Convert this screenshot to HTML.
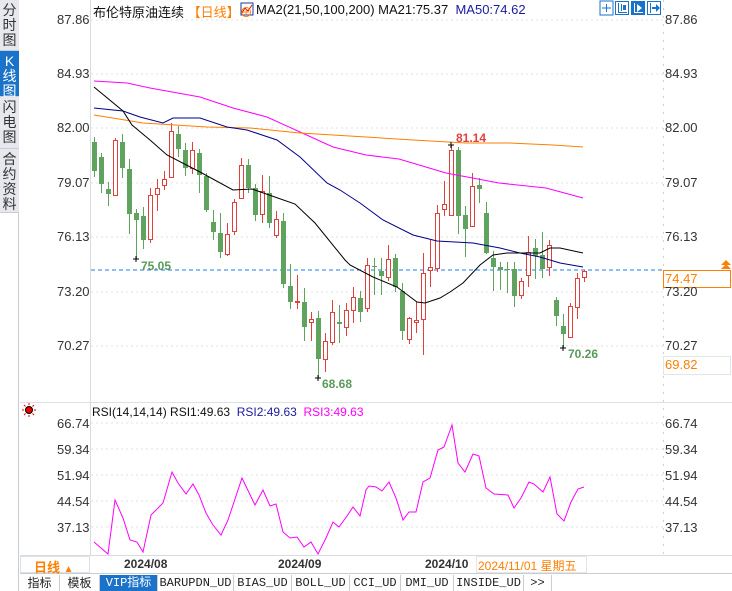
<!DOCTYPE html>
<html><head><meta charset="utf-8">
<style>
*{margin:0;padding:0;box-sizing:border-box}
body{width:732px;height:591px;overflow:hidden;background:#fff;font-family:"Liberation Sans","Noto Sans CJK SC",sans-serif;position:relative}
.side{position:absolute;left:0;top:0;width:19px;height:591px;background:#fff;border-right:1px solid #c8ccd4}
.tab{position:absolute;left:0;width:19px;background:#e6e8ee;color:#333;font-size:14px;line-height:15px;text-align:center;padding-top:3px;border-bottom:1px solid #c8ccd4}
.tab.on{background:#1a73c8;color:#fff}
.t{position:absolute;white-space:nowrap}
.ax{font-size:13px;color:#333;right:auto}
.btab{position:absolute;top:575px;height:16px;font-size:12px;line-height:16px;text-align:center;border-right:1px solid #c8ccd4;color:#222;font-family:"Liberation Mono","Noto Sans CJK SC",monospace}
</style></head><body>
<div class="side">
 <div class="tab" style="top:0;height:51px">分<br>时<br>图</div>
 <div class="tab on" style="top:51px;height:46px">K<br>线<br>图</div>
 <div class="tab" style="top:97px;height:52px">闪<br>电<br>图</div>
 <div class="tab" style="top:149px;height:64px">合<br>约<br>资<br>料</div>
</div>
<svg style="position:absolute;left:0;top:0" width="732" height="591" id="s">
 <g stroke="#e2e2e2" stroke-dasharray="2,3">
  <line x1="91" x2="663" y1="20" y2="20"/><line x1="91" x2="663" y1="74" y2="74"/><line x1="91" x2="663" y1="128" y2="128"/><line x1="91" x2="663" y1="183" y2="183"/><line x1="91" x2="663" y1="237" y2="237"/><line x1="91" x2="663" y1="292" y2="292"/><line x1="91" x2="663" y1="346" y2="346"/>
  <line x1="91" x2="663" y1="423" y2="423"/><line x1="91" x2="663" y1="449" y2="449"/><line x1="91" x2="663" y1="475" y2="475"/><line x1="91" x2="663" y1="501" y2="501"/><line x1="91" x2="663" y1="527" y2="527"/>
 </g>
 <line x1="90.5" x2="90.5" y1="0" y2="555" stroke="#d8dce2"/>
 <line x1="663.5" x2="663.5" y1="0" y2="555" stroke="#d0d0d0" stroke-dasharray="2,6"/>
 <line x1="20" x2="732" y1="402.5" y2="402.5" stroke="#dde1e6"/>
 <line x1="20" x2="732" y1="555.5" y2="555.5" stroke="#d8dce2"/>
 <line x1="20" x2="732" y1="573.5" y2="573.5" stroke="#c8ccd4"/>
 <line x1="91" x2="663" y1="270" y2="270" stroke="#1a7ff0" stroke-dasharray="4,3"/>
 <g id="c"></g>
 <g fill="none" stroke-width="1">
  <polyline stroke="#ff00ff" points="94,81 127,83 150,88 200,97 233,108 267,117 300,132 333,147 366,155 399,159 446,173 499,183 546,188 583,198"/>
  <polyline stroke="#ff7f00" points="94,115 143,123 207,127 250,128 300,133 366,137 413,140 466,143 509,143 553,145 583,147"/>
  <polyline stroke="#00008b" points="94,108 123,111 140,117 163,123 173,118 200,118 227,127 247,130 277,140 300,157 327,183 340,190 360,203 383,220 413,235 437,241 473,243 500,248 520,253 540,257 560,263 583,267"/>
  <polyline stroke="#000" points="94,87 123,111 132,125 150,140 167,155 200,172 233,190 252,189 272,196 295,204 315,223 345,260 350,265 373,277 397,287 417,302 425,303 440,298 450,292 463,283 480,265 493,255 507,253 523,253 540,253 550,248 560,248 583,253"/>
  <polyline stroke="#ff00ff" points="94,542 108,554 115,500 123,518 130,540 137,542 143,552 151,515 163,503 172,472 178,483 186,494 193,484 199,495 206,513 213,525 221,535 228,520 242,478 255,505 263,490 270,506 276,504 283,532 290,538 297,537 304,547 311,542 318,554 326,538 333,522 339,527 347,516 353,507 360,516 366,490 369,486 376,487 382,491 389,482 396,498 403,520 409,512 416,512 423,482 430,478 438,450 444,447 452,425 458,463 465,472 473,454 479,456 486,488 494,494 508,495 514,508 521,498 529,482 534,484 543,492 550,477 557,514 564,521 571,502 578,489 584,487"/>
 </g>
 <path d="M133 259h6M136 256v6M315 378h6M318 375v6M448 145h6M451 142v6M560 348h6M563 345v6" stroke="#000"/>
 <g fill="#1a73c8"><rect x="600" y="1" width="13" height="14" fill="#fff" stroke="#1a73c8"/><path d="M606 4h1v8h-1zM602 7.5h9v1h-9z"/>
 <rect x="615.5" y="1.5" width="13" height="13" fill="#fff" stroke="#1a73c8"/><path d="M618 3v10h9v-1h-8v-9z M621 4v7h1v-7zM623 5h3v5h-3z"/>
 <rect x="631" y="1" width="14" height="14"/><path d="M634 3v10h9v-1h-8v-9zM637 4l5 4-5 4z" fill="#fff"/>
 <rect x="647.5" y="1.5" width="13" height="13" fill="#fff" stroke="#1a73c8"/><path d="M650 3h1v10h-1zM652 7h4v2h-4zM656 4l4 4-4 4z"/></g>
 <path d="M721 269l5-5 5 5zM721 265l5-5 5 5z" fill="#ff8000"/>
 <rect x="663.5" y="270.5" width="67" height="17" fill="none" stroke="#ff8000"/>
 <rect x="663.5" y="356.5" width="67" height="18" fill="none" stroke="#e0e6ea"/>
 <rect x="476.5" y="556.5" width="110" height="16" fill="none" stroke="#e6e6e6"/>
 <rect x="20.5" y="556.5" width="69" height="16" fill="none" stroke="#dde1e6"/>
 <circle cx="29" cy="410" r="3.5" fill="#e00" stroke="#000"/>
 <path d="M29 403v2M29 415v2M22 410h2M34 410h2M24 405l1.5 1.5M34 405l-1.5 1.5M24 415l1.5-1.5M34 415l-1.5-1.5" stroke="#e00"/>
 <rect x="241" y="3" width="12" height="12" fill="#fff" stroke="#1a3aa0"/><path d="M242 13l3-5 3 3 4-6" stroke="#e00" fill="none"/>
</svg>
<div class="t" style="left:93px;top:2px;font-size:13px;color:#111">布伦特原油连续 <span style="color:#ff7f00">【日线】</span><span style="color:#ff7f00">⊕</span></div>
<div class="t" style="left:256px;top:2px;font-size:13px;color:#111">MA2(21,50,100,200) MA21:75.37 &nbsp;<span style="color:#1a1aa0">MA50:74.62</span></div>
<div class="t ax" style="left:57px;top:12px">87.86</div>
<div class="t ax" style="left:57px;top:66px">84.93</div>
<div class="t ax" style="left:57px;top:120px">82.00</div>
<div class="t ax" style="left:57px;top:175px">79.07</div>
<div class="t ax" style="left:57px;top:229px">76.13</div>
<div class="t ax" style="left:57px;top:284px">73.20</div>
<div class="t ax" style="left:57px;top:338px">70.27</div>
<div class="t ax" style="left:665px;top:12px">87.86</div>
<div class="t ax" style="left:665px;top:66px">84.93</div>
<div class="t ax" style="left:665px;top:120px">82.00</div>
<div class="t ax" style="left:665px;top:175px">79.07</div>
<div class="t ax" style="left:665px;top:229px">76.13</div>
<div class="t ax" style="left:665px;top:284px">73.20</div>
<div class="t ax" style="left:665px;top:338px">70.27</div>
<div class="t ax" style="left:665px;top:271px;color:#ff7f00">74.47</div>
<div class="t ax" style="left:665px;top:357px;color:#ff7f00">69.82</div>
<div class="t" style="left:141px;top:259px;font-size:12px;color:#5a9a5a;font-weight:bold">75.05</div>
<div class="t" style="left:322px;top:377px;font-size:12px;color:#5a9a5a;font-weight:bold">68.68</div>
<div class="t" style="left:568px;top:347px;font-size:12px;color:#5a9a5a;font-weight:bold">70.26</div>
<div class="t" style="left:456px;top:131px;font-size:12px;color:#e04040;font-weight:bold">81.14</div>
<div class="t" style="left:92px;top:405px;font-size:12px;color:#111">RSI(14,14,14) RSI1:49.63 &nbsp;<span style="color:#1a1aa0">RSI2:49.63</span> &nbsp;<span style="color:#ff00ff">RSI3:49.63</span></div>
<div class="t ax" style="left:57px;top:416px">66.74</div>
<div class="t ax" style="left:57px;top:442px">59.34</div>
<div class="t ax" style="left:57px;top:468px">51.94</div>
<div class="t ax" style="left:57px;top:494px">44.54</div>
<div class="t ax" style="left:57px;top:520px">37.13</div>
<div class="t ax" style="left:665px;top:416px">66.74</div>
<div class="t ax" style="left:665px;top:442px">59.34</div>
<div class="t ax" style="left:665px;top:468px">51.94</div>
<div class="t ax" style="left:665px;top:494px">44.54</div>
<div class="t ax" style="left:665px;top:520px">37.13</div>
<div class="t" style="left:34px;top:557px;font-size:13px;color:#ff7f00;font-weight:bold">日线 <span style="font-size:10px">▲</span></div>
<div class="t" style="left:124px;top:557px;font-size:12px;color:#333;font-weight:bold">2024/08</div>
<div class="t" style="left:278px;top:557px;font-size:12px;color:#333;font-weight:bold">2024/09</div>
<div class="t" style="left:425px;top:557px;font-size:12px;color:#333;font-weight:bold">2024/10</div>
<div class="t" style="left:478px;top:557px;font-size:12px;color:#ff7f00">2024/11/01 星期五</div>
<div class="btab" style="left:20px;width:40px;font-family:'Noto Sans CJK SC',sans-serif">指标</div>
<div class="btab" style="left:60px;width:40px;font-family:'Noto Sans CJK SC',sans-serif">模板</div>
<div class="btab" style="left:100px;width:58px;background:#1a73c8;color:#fff">VIP指标</div>
<div class="btab" style="left:158px;width:76px">BARUPDN_UD</div>
<div class="btab" style="left:234px;width:58px">BIAS_UD</div>
<div class="btab" style="left:292px;width:58px">BOLL_UD</div>
<div class="btab" style="left:350px;width:51px">CCI_UD</div>
<div class="btab" style="left:401px;width:53px">DMI_UD</div>
<div class="btab" style="left:454px;width:70px">INSIDE_UD</div>
<div class="btab" style="left:524px;width:28px">&gt;&gt;</div>
<script>
var d=[
[94,'g',142,171,137,177],[101,'g',157,184,153,193],[108,'g',189,194,182,206],[115,'r',140,195,138,196],[122,'g',142,168,134,178],[129,'g',169,214,159,234],[136,'g',213,220,209,259],[143,'g',216,240,207,249],[150,'r',195,239,188,243],[157,'r',188,194,179,211],[164,'r',179,185,171,190],[171,'r',131,177,123,178],[178,'g',134,149,126,157],[185,'g',150,168,143,176],[192,'r',150,168,142,174],[199,'g',153,175,149,193],[206,'g',176,210,173,212],[213,'g',222,232,210,240],[220,'g',233,252,213,258],[227,'r',234,254,223,256],[234,'r',202,231,199,235],[241,'r',165,198,158,199],[248,'g',165,188,159,193],[255,'g',188,215,184,221],[262,'r',191,214,175,223],[269,'g',193,223,176,228],[276,'r',219,235,211,238],[283,'g',221,284,213,288],[290,'g',286,302,264,309],[297,'r',301,302,275,309],[304,'g',302,327,288,341],[311,'r',319,322,312,341],[318,'g',318,359,311,378],[325,'r',341,359,333,372],[332,'r',312,342,300,345],[339,'g',322,324,305,343],
[346,'r',310,327,303,336],[353,'r',297,310,287,323],[360,'g',298,312,291,322],[367,'r',265,308,258,312],[374,'g',266,267,258,295],[381,'g',271,276,258,295],[388,'r',259,277,245,281],[395,'g',258,287,254,292],[402,'g',291,331,283,340],[409,'r',318,339,317,344],[416,'r',320,322,302,333],[423,'r',273,319,253,355],[430,'r',267,270,240,287],[437,'r',213,268,205,272],[444,'r',204,209,181,216],[451,'r',150,215,145,215],[458,'g',150,216,147,234],[465,'g',215,229,206,257],[472,'r',186,226,173,227],[479,'g',185,189,178,203],[486,'g',213,253,202,254],[493,'g',258,267,251,291],[500,'g',267,270,262,290],[507,'g',269,270,262,293],[514,'g',269,296,262,307],[521,'r',281,295,278,299],[528,'r',252,275,236,287],[535,'g',248,256,239,279],[542,'g',255,269,232,278],[549,'r',245,267,240,276],[556,'g',300,316,297,326],[563,'g',326,334,314,348],[570,'r',306,337,303,337],[577,'r',278,307,273,319],[584,'r',271,277,270,282]];
var s='';d.forEach(function(c){var x=c[0],col=c[1]=='g'?'#5fa35f':'#e0413c';
if(c[1]=='g'){s+='<line x1="'+(x+.5)+'" x2="'+(x+.5)+'" y1="'+c[4]+'" y2="'+c[5]+'" stroke="'+col+'"/>';s+='<rect x="'+(x-2)+'" y="'+c[2]+'" width="5" height="'+Math.max(1,c[3]-c[2])+'" fill="'+col+'"/>';}
else{s+='<line x1="'+(x+.5)+'" x2="'+(x+.5)+'" y1="'+c[4]+'" y2="'+c[2]+'" stroke="'+col+'"/><line x1="'+(x+.5)+'" x2="'+(x+.5)+'" y1="'+c[3]+'" y2="'+c[5]+'" stroke="'+col+'"/>';s+='<rect x="'+(x-1.5)+'" y="'+(c[2]+.5)+'" width="4" height="'+Math.max(1,c[3]-c[2])+'" fill="#fff" stroke="'+col+'"/>';}});
document.getElementById('c').innerHTML=s;
</script>
</body></html>
